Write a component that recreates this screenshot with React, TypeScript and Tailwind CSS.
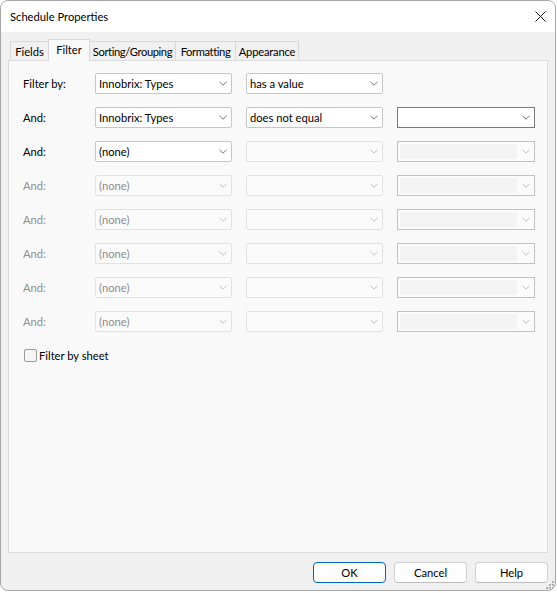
import React from "react";

type ComboKind = "enabled" | "disabled" | "edit" | "editDisabled";

const FONT = { fontFamily: 'Lato, "Liberation Sans", Arial, sans-serif' };

function Chevron({ color }: { color: string }) {
  return (
    <svg width="8" height="5" viewBox="0 0 8 5" className="shrink-0">
      <path d="M0.5 0.8 L4 4.2 L7.5 0.8" fill="none" stroke={color} strokeWidth="0.9" />
    </svg>
  );
}

function Combo({ kind, text }: { kind: ComboKind; text?: string }) {
  if (kind === "enabled") {
    return (
      <div className="h-[21px] w-[137px] bg-white border border-[#c6c6c6] rounded-[2px] flex items-center pl-[3px] pr-[4px] justify-between">
        <span className="text-[11.2px] text-black leading-none whitespace-nowrap">{text}</span>
        <Chevron color="#6a6a6a" />
      </div>
    );
  }
  if (kind === "disabled") {
    return (
      <div className="h-[21px] w-[137px] bg-[#fafafa] border border-[#e2e2e2] rounded-[2px] flex items-center pl-[3px] pr-[4px] justify-between">
        <span className="text-[11.2px] text-[#8e8e8e] leading-none whitespace-nowrap">{text ?? ""}</span>
        <Chevron color="#bcbcbc" />
      </div>
    );
  }
  if (kind === "edit") {
    return (
      <div className="h-[21px] w-[138px] bg-white border border-[#7a7a7a] flex items-center justify-end pr-[4px]">
        <Chevron color="#555555" />
      </div>
    );
  }
  return (
    <div className="h-[21px] w-[138px] bg-[#fbfbfb] border border-[#c2c2c2] flex items-stretch p-[2px] pr-[4px] gap-[5px]">
      <div className="flex-1 bg-[#f3f3f3]" />
      <div className="flex items-center">
        <Chevron color="#bcbcbc" />
      </div>
    </div>
  );
}

type Row = {
  label: string;
  labelOn: boolean;
  c1: { kind: ComboKind; text?: string };
  c2: { kind: ComboKind; text?: string };
  c3: { kind: ComboKind } | null;
};

const rows: Row[] = [
  {
    label: "Filter by:",
    labelOn: true,
    c1: { kind: "enabled", text: "Innobrix: Types" },
    c2: { kind: "enabled", text: "has a value" },
    c3: null,
  },
  {
    label: "And:",
    labelOn: true,
    c1: { kind: "enabled", text: "Innobrix: Types" },
    c2: { kind: "enabled", text: "does not equal" },
    c3: { kind: "edit" },
  },
  {
    label: "And:",
    labelOn: true,
    c1: { kind: "enabled", text: "(none)" },
    c2: { kind: "disabled" },
    c3: { kind: "editDisabled" },
  },
  ...[0, 1, 2, 3, 4].map(() => ({
    label: "And:",
    labelOn: false,
    c1: { kind: "disabled" as ComboKind, text: "(none)" },
    c2: { kind: "disabled" as ComboKind },
    c3: { kind: "editDisabled" as ComboKind },
  })),
];

function Tab({
  label,
  w,
  selected,
  first,
  track,
}: {
  label: string;
  w: string;
  selected?: boolean;
  first?: boolean;
  track: string;
}) {
  if (selected) {
    return (
      <div
        className={`${w} h-[22px] -mb-px -ml-px relative z-20 bg-[#f9f9f9] border border-b-0 border-[#d9d9d9] flex justify-center pt-[3px]`}
      >
        <span className={`text-[11.2px] leading-[14px] text-black whitespace-nowrap ${track}`}>{label}</span>
      </div>
    );
  }
  return (
    <div
      className={`${w} h-[19px] ${first ? "" : "-ml-px"} relative bg-[#f0f0f0] border border-b-0 border-[#d9d9d9] flex justify-center pt-[3px]`}
    >
      <span className={`text-[11.2px] leading-[14px] text-black whitespace-nowrap ${track}`}>{label}</span>
    </div>
  );
}

function Button({ label, primary }: { label: string; primary?: boolean }) {
  return (
    <div
      className={`w-[73px] h-[21px] rounded-[4px] bg-[#fdfdfd] border flex items-center justify-center ${
        primary ? "border-[#0067c0]" : "border-[#d0d0d0] border-b-[#bcbcbc]"
      }`}
    >
      <span className="text-[11.2px] leading-none text-black">{label}</span>
    </div>
  );
}

export default function App() {
  return (
    <div className="w-[557px] h-[593px] bg-white" style={FONT}>
      <div className="w-[556px] h-[591px] border border-[#a6a6a6] rounded-[8px] overflow-hidden flex flex-col bg-[#f0f0f0] relative">
        {/* Title bar */}
        <div className="h-[31px] bg-white flex items-center justify-between pl-[9px] pr-[9px] shrink-0">
          <span className="text-[11.2px] text-black leading-none">Schedule Properties</span>
          <svg width="11" height="11" viewBox="0 0 11 11">
            <path d="M0.5 0.5 L10.5 10.5 M10.5 0.5 L0.5 10.5" stroke="#1a1a1a" strokeWidth="1" fill="none" />
          </svg>
        </div>

        {/* Body */}
        <div className="flex-1 flex flex-col px-[7px] pt-[7px]">
          <div className="h-[21px] flex items-end pl-[2px] relative z-10 shrink-0">
            <Tab label="Fields" w="w-[39px]" first track="tracking-[0px]" />
            <Tab label="Filter" w="w-[42px]" selected track="tracking-[0px]" />
            <Tab label="Sorting/Grouping" w="w-[87px]" track="tracking-[-0.4px]" />
            <Tab label="Formatting" w="w-[61px]" track="tracking-[-0.4px]" />
            <Tab label="Appearance" w="w-[64px]" track="tracking-[-0.2px]" />
          </div>

          <div className="flex-1 bg-[#f9f9f9] border border-[#dcdcdc] pt-[12px] pl-[14px]">
            <div className="flex flex-col gap-[13px]">
              {rows.map((r, i) => (
                <div key={i} className="flex items-center h-[21px]">
                  <div
                    className={`w-[72px] text-[11.2px] leading-none ${r.labelOn ? "text-black" : "text-[#8e8e8e]"}`}
                  >
                    {r.label}
                  </div>
                  <Combo kind={r.c1.kind} text={r.c1.text} />
                  <div className="w-[14px]" />
                  <Combo kind={r.c2.kind} text={r.c2.text} />
                  <div className="w-[14px]" />
                  {r.c3 ? <Combo kind={r.c3.kind} /> : null}
                </div>
              ))}
            </div>

            <div className="mt-[17px] ml-[1px] flex items-center gap-[2px]">
              <div className="w-[13px] h-[13px] border border-[#9a9a9a] rounded-[2px] bg-[#f6f6f6]" />
              <span className="text-[11.2px] leading-none text-black">Filter by sheet</span>
            </div>
          </div>

          <div className="h-[37px] pt-[9px] flex justify-end gap-[8px] shrink-0">
            <Button label="OK" primary />
            <Button label="Cancel" />
            <Button label="Help" />
          </div>
        </div>

        {/* Resize grip */}
        <svg className="absolute right-[1px] bottom-[1px]" width="8" height="8" viewBox="0 0 8 8">
          <rect x="6" y="0" width="2" height="2" fill="#b0b0b0" />
          <rect x="3" y="3" width="2" height="2" fill="#b0b0b0" />
          <rect x="6" y="3" width="2" height="2" fill="#b0b0b0" />
          <rect x="0" y="6" width="2" height="2" fill="#b0b0b0" />
          <rect x="3" y="6" width="2" height="2" fill="#b0b0b0" />
          <rect x="6" y="6" width="2" height="2" fill="#b0b0b0" />
        </svg>
      </div>
    </div>
  );
}
